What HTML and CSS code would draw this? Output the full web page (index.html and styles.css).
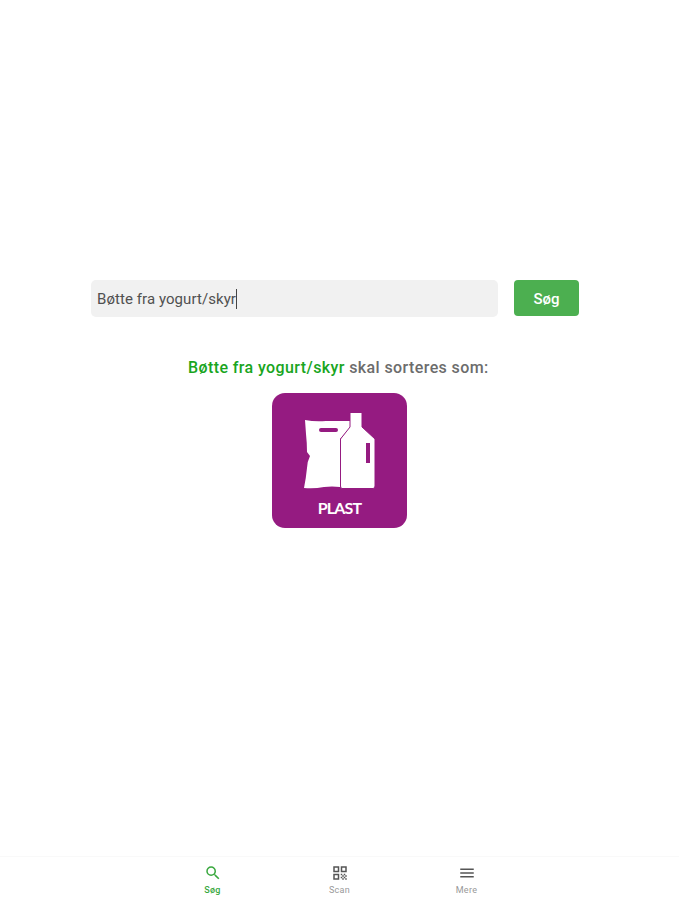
FILE: index.html
```
<!DOCTYPE html>
<html lang="da">
<head>
  <meta charset="UTF-8">
  <meta name="viewport" content="width=device-width, initial-scale=1.0">
  <title>Affaldssortering</title>
  <link rel="stylesheet" href="styles.css">
</head>
<body>
  <main class="content">
    <div class="search">
      <div class="search-input"><span class="search-text">Bøtte fra yogurt/skyr</span><span class="caret"></span></div>
      <button class="search-button">Søg</button>
    </div>
    <p class="result"><span class="result-name">Bøtte fra yogurt/skyr</span> <span class="result-rest">skal sorteres som:</span></p>
    <div class="card">
      <svg class="card-icon" width="72" height="78" viewBox="0 0 72 78">
        <!-- bag -->
        <path fill="#fff" d="M1 8 Q11 10 22 9 H46 V16 L36 27 V75 Q28 74 20 75 Q10 77 0 76 Q2 66 3 56 Q3 50 6 44 L3 40 Q3 31 2 22 Z"/>
        <path stroke="#951b81" stroke-width="4" stroke-linecap="round" d="M17 18 H32"/>
        <!-- bottle -->
        <path fill="#fff" stroke="#951b81" stroke-width="1" d="M46 0.5 H58 V15 L71 27 V74 Q71 76.500 69 76.500 H38 Q36.500 76.500 36.500 74 V27 L46 15 Z"/>
        <path stroke="#951b81" stroke-width="4" d="M64 31 V51"/>
      </svg>
      <span class="card-label">PLAST</span>
    </div>
  </main>
  <nav class="tabs">
    <a class="tab active">
      <svg width="18" height="18" viewBox="0 0 24 24"><path fill="currentColor" d="M15.500 14h-.79l-.28-.27A6.470 6.470 0 0 0 16 9.500 6.500 6.500 0 1 0 9.500 16c1.610 0 3.090-.59 4.230-1.570l.27.28v.79l5 4.990L20.490 19l-4.990-5zm-6 0C7.010 14 5 11.990 5 9.500S7.010 5 9.500 5 14 7.010 14 9.500 11.990 14 9.500 14z"/></svg>
      <span>Søg</span>
    </a>
    <a class="tab">
      <svg width="18" height="18" viewBox="0 0 24 24"><path fill="currentColor" fill-rule="evenodd" d="M3 3h8v8H3zM5 5v4h4V5zM13 3h8v8h-8zM15 5v4h4V5zM3 13h8v8H3zM5 15v4h4v-4zM13 13h2v2h-2zM15 15h2v2h-2zM17 13h2v2h-2zM19 15h2v2h-2zM13 17h2v2h-2zM17 17h2v2h-2zM15 19h2v2h-2zM19 19h2v2h-2z"/></svg>
      <span>Scan</span>
    </a>
    <a class="tab">
      <svg width="18" height="18" viewBox="0 0 24 24"><path fill="currentColor" d="M3 18h18v-2H3v2zm0-5h18v-2H3v2zm0-7v2h18V6H3z"/></svg>
      <span>Mere</span>
    </a>
  </nav>
</body>
</html>
```
FILE: styles.css
```
body {
  margin: 0;
  height: 900px;
  display: flex;
  flex-direction: column;
  overflow: hidden;
  background-color: #fff;
  font-family: Roboto, sans-serif;
}
.content {
  flex: 1;
  padding: 280px 100px 0 91px;
}
.search {
  display: flex;
  align-items: flex-start;
  gap: 16px;
}
.search-input {
  flex: 1;
  height: 37px;
  box-sizing: border-box;
  padding-left: 6px;
  display: flex;
  align-items: center;
  border-radius: 5px;
  background-color: #f1f1f1;
  color: #505050;
  font-size: 15px;
  letter-spacing: 0.07px;
}
.caret {
  width: 1px;
  height: 20px;
  background-color: #444;
}
.search-button {
  width: 65px;
  height: 36px;
  padding: 2px 0 0;
  border: 0;
  border-radius: 4px;
  background-color: #4caf50;
  color: #fff;
  font-family: inherit;
  font-size: 15px;
  font-weight: 500;
}
.result {
  margin: 40px 0 0 97px;
  line-height: 22px;
  font-size: 16px;
  font-weight: 500;
  letter-spacing: 0.4px;
  white-space: nowrap;
  color: #6c6c6c;
}
.result-name {
  color: #19a51e;
}
.card {
  width: 135px;
  height: 135px;
  margin: 14px 0 0 181px;
  box-sizing: border-box;
  padding-top: 19px;
  display: flex;
  flex-direction: column;
  align-items: center;
  border-radius: 13px;
  background-color: #951b81;
}
.card-icon {
  fill: none;
}
.card-label {
  margin-top: 8px;
  line-height: 20px;
  color: #fff;
  font-family: Lato, sans-serif;
  font-size: 16px;
  font-weight: 700;
  letter-spacing: -0.8px;
}
.tabs {
  height: 43px;
  display: flex;
  justify-content: center;
  border-top: 1px solid #f9f9f9;
}
.tab {
  width: 127px;
  padding-top: 7px;
  display: flex;
  flex-direction: column;
  align-items: center;
  color: #555;
}
.tab span {
  margin-top: 3px;
  line-height: 11px;
  font-size: 9px;
  letter-spacing: 0.3px;
  color: #999;
}
.tab.active,
.tab.active span {
  color: #39a83e;
}
.tab.active span {
  font-weight: 500;
}
```
